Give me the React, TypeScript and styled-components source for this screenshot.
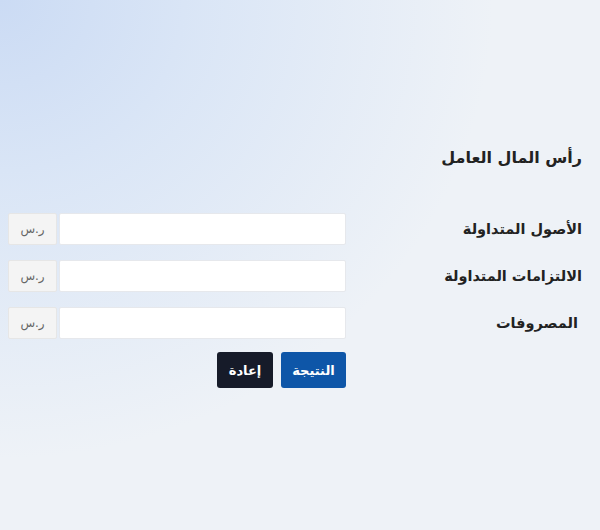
import styled, { createGlobalStyle } from 'styled-components';

const GlobalStyle = createGlobalStyle`
  html, body {
    margin: 0;
    padding: 0;
  }
  body {
    width: 600px;
    height: 530px;
    overflow: hidden;
    font-family: "DejaVu Sans", "Noto Sans Arabic", sans-serif;
    background:
      radial-gradient(ellipse 580px 540px at 0% 0%, #cbdbf4 0%, rgba(212, 226, 246, 0.75) 35%, rgba(238, 242, 247, 0) 85%),
      #eef2f7;
  }
`;

// Whole calculator page, right-to-left
const Page = styled.div`
  direction: rtl;
  box-sizing: border-box;
  height: 530px;
  padding: 146px 18px 0 8px;
`;

const Title = styled.h2`
  margin: 0 0 43px;
  font-size: 16px;
  font-weight: 700;
  color: #222;
  line-height: 24px;
`;

const Form = styled.div`
  display: grid;
  grid-template-columns: 236px 338px;
  row-gap: 15px;
  align-items: center;
`;

const Label = styled.label<{ $inset?: number }>`
  font-size: 14.5px;
  font-weight: 700;
  color: #222;
  padding-right: ${(p) => p.$inset ?? 0}px;
`;

const InputGroup = styled.div`
  display: flex;
  gap: 2px;
  height: 32px;
`;

const Field = styled.input`
  flex: 1;
  min-width: 0;
  box-sizing: border-box;
  height: 100%;
  border: 1px solid #e6e8ec;
  border-radius: 2px;
  background: #fff;
  outline: none;
`;

const Suffix = styled.span`
  width: 49px;
  box-sizing: border-box;
  display: flex;
  align-items: center;
  justify-content: center;
  background: #f4f4f4;
  border: 1px solid #e6e6e6;
  border-radius: 2px;
  font-size: 12px;
  color: #666;
`;

const Actions = styled.div`
  grid-column: 2;
  display: flex;
  gap: 8px;
  margin-top: -2px;
`;

const Button = styled.button<{ $dark?: boolean; $w: number }>`
  width: ${(p) => p.$w}px;
  height: 36px;
  padding: 0;
  border: none;
  border-radius: 3px;
  background: ${(p) => (p.$dark ? '#161b29' : '#0e56a8')};
  color: #fff;
  font-family: inherit;
  font-size: 13px;
  font-weight: 700;
  cursor: pointer;
`;

const rows = [
  { label: 'الأصول المتداولة', inset: 0 },
  { label: 'الالتزامات المتداولة', inset: 0 },
  { label: 'المصروفات', inset: 4 },
];

export default function App() {
  return (
    <>
      <GlobalStyle />
      <Page>
        <Title>رأس المال العامل</Title>
        <Form>
          {rows.map((r) => (
            <>
              <Label key={r.label + '-l'} $inset={r.inset}>
                {r.label}
              </Label>
              <InputGroup key={r.label + '-g'}>
                <Field type="text" />
                <Suffix>ر.س</Suffix>
              </InputGroup>
            </>
          ))}
          <Actions>
            <Button $w={65}>النتيجة</Button>
            <Button $w={56} $dark>
              إعادة
            </Button>
          </Actions>
        </Form>
      </Page>
    </>
  );
}
